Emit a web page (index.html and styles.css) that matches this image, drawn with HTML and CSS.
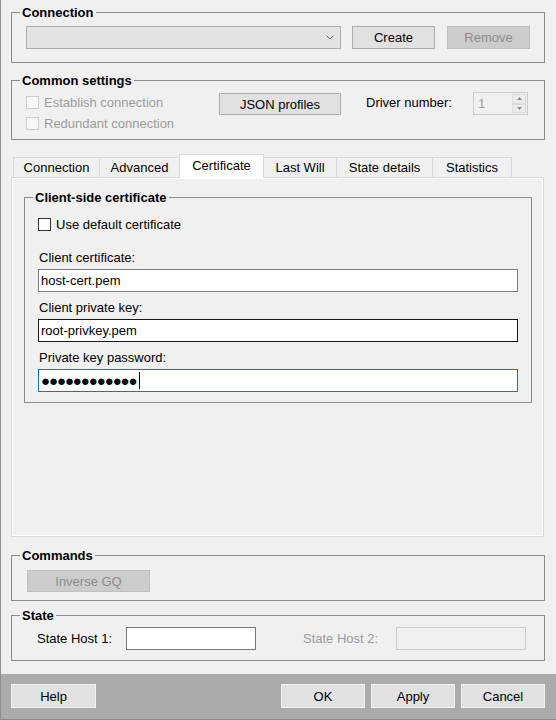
FILE: index.html
```html
<!DOCTYPE html>
<html lang="en">
<head>
    <meta charset="UTF-8">
    <title>Connection settings</title>
    <link rel="stylesheet" href="styles.css">
</head>
<body>
    <div class="dialog">
        <div class="main">
            <fieldset class="group group-connection">
                <legend>Connection</legend>
                <div class="conn-body">
                    <div class="combo">
                        <svg width="8" height="5" viewBox="0 0 8 5"><path d="M0.5 0.5 L4 4 L7.5 0.5" fill="none" stroke="#666"/></svg>
                    </div>
                    <button class="btn btn-create">Create</button>
                    <button class="btn btn-remove" disabled>Remove</button>
                </div>
            </fieldset>

            <fieldset class="group group-common">
                <legend>Common settings</legend>
                <div class="common-body">
                    <div class="checks">
                        <div class="check-row disabled"><span class="box"></span>Establish connection</div>
                        <div class="check-row disabled"><span class="box"></span>Redundant connection</div>
                    </div>
                    <button class="btn btn-json">JSON profiles</button>
                    <div class="driver-label">Driver number:</div>
                    <div class="spin">
                        <span class="spin-value">1</span>
                        <div class="spin-buttons">
                            <span><svg width="5" height="3" viewBox="0 0 5 3"><path d="M2.5 0 L5 3 L0 3Z" fill="#8a8a8a"/></svg></span>
                            <span><svg width="5" height="3" viewBox="0 0 5 3"><path d="M0 0 L5 0 L2.5 3Z" fill="#8a8a8a"/></svg></span>
                        </div>
                    </div>
                </div>
            </fieldset>

            <div class="tabs">
                <div class="tab tab-connection">Connection</div>
                <div class="tab tab-advanced">Advanced</div>
                <div class="tab tab-certificate active">Certificate</div>
                <div class="tab tab-lastwill">Last Will</div>
                <div class="tab tab-state">State details</div>
                <div class="tab tab-stats">Statistics</div>
            </div>
            <div class="panel">
                <fieldset class="group group-cert">
                    <legend>Client-side certificate</legend>
                    <div class="cert-body">
                        <div class="check-row"><span class="box"></span>Use default certificate</div>
                        <div class="field-label first">Client certificate:</div>
                        <div class="field">host-cert.pem</div>
                        <div class="field-label">Client private key:</div>
                        <div class="field hover">root-privkey.pem</div>
                        <div class="field-label">Private key password:</div>
                        <div class="field focus"><span class="dots">●●●●●●●●●●●●</span><span class="caret"></span></div>
                    </div>
                </fieldset>
            </div>

            <fieldset class="group group-commands">
                <legend>Commands</legend>
                <div class="commands-body">
                    <button class="btn btn-inverse" disabled>Inverse GQ</button>
                </div>
            </fieldset>

            <fieldset class="group group-state">
                <legend>State</legend>
                <div class="state-body">
                    <div class="state-label">State Host 1:</div>
                    <div class="field state-field"></div>
                    <div class="state-label second disabled">State Host 2:</div>
                    <div class="field state-field disabled"></div>
                </div>
            </fieldset>
        </div>

        <div class="bar">
            <button class="btn bar-btn btn-help">Help</button>
            <div class="bar-right">
                <button class="btn bar-btn">OK</button>
                <button class="btn bar-btn">Apply</button>
                <button class="btn bar-btn">Cancel</button>
            </div>
        </div>
    </div>
</body>
</html>
```

FILE: styles.css
```css
* {
    margin: 0;
    padding: 0;
    box-sizing: border-box;
}

body {
    font-family: "Liberation Sans", Arial, sans-serif;
    font-size: 13px;
    color: #000;
    background: #f0f0f0;
    width: 556px;
    height: 720px;
    overflow: hidden;
}

.dialog {
    height: 720px;
    display: flex;
    flex-direction: column;
    border-left: 1px solid #8f8f8f;
}

.main {
    flex: 1;
    display: flex;
    flex-direction: column;
    padding: 5px 11px 13px 10px;
}

/* group boxes */
.group {
    flex: none;
    min-width: 0;
    border: 1px solid #8c8c8c;
}

.group legend {
    margin-left: 8px;
    padding: 0 2px;
    font-weight: bold;
    line-height: 15px;
}

.group-common {
    margin-top: 10px;
}

.group-commands {
    margin-top: 11px;
}

.group-state {
    margin-top: 7px;
}

/* buttons */
.btn {
    font: inherit;
    color: #000;
    height: 23px;
    border: 1px solid #adadad;
    background: #e1e1e1;
}

.btn:disabled {
    background: #cccccc;
    border-color: #bfbfbf;
    color: #8d8d8d;
}

/* connection */
.conn-body {
    display: flex;
    padding: 6px 0 13px 14px;
}

.combo {
    width: 315px;
    height: 23px;
    border: 1px solid #adadad;
    background: #e3e3e3;
    display: flex;
    align-items: center;
    justify-content: flex-end;
    padding-right: 6px;
}

.btn-create {
    width: 83px;
    margin-left: 11px;
}

.btn-remove {
    width: 83px;
    margin-left: 12px;
}

/* common settings */
.common-body {
    display: flex;
    align-items: flex-start;
    padding: 4px 0 5px 14px;
}

.checks {
    width: 193px;
}

.check-row {
    height: 21px;
    display: flex;
    align-items: center;
    gap: 5px;
}

.box {
    width: 13px;
    height: 13px;
    border: 1px solid #333;
    background: #fff;
}

.check-row.disabled {
    color: #9b9b9b;
}

.check-row.disabled .box {
    border-color: #cccccc;
    background: #f7f7f7;
}

.btn-json {
    width: 122px;
    height: 22px;
    margin-top: 1px;
}

.driver-label {
    width: 107px;
    margin-left: 25px;
    line-height: 21px;
}

.spin {
    width: 55px;
    height: 23px;
    border: 1px solid #cccccc;
    background: #f0f0f0;
    color: #9b9b9b;
    display: flex;
    justify-content: space-between;
    padding: 1px;
}

.spin-value {
    padding-left: 3px;
    line-height: 19px;
}

.spin-buttons {
    width: 14px;
    display: flex;
    flex-direction: column;
}

.spin-buttons span {
    flex: 1;
    border: 1px solid #dcdcdc;
    background: #ebebeb;
    display: flex;
    align-items: center;
    justify-content: center;
}

/* tabs */
.tabs {
    flex: none;
    display: flex;
    align-items: flex-end;
    height: 23px;
    margin-top: 14px;
    padding-left: 2px;
}

.tab {
    height: 20px;
    line-height: 19px;
    text-align: center;
    border: 1px solid #d9d9d9;
    border-bottom: none;
    background: #f0f0f0;
    margin-right: -1px;
}

.tab.active {
    position: relative;
    height: 24px;
    line-height: 22px;
    margin-bottom: -1px;
    background: #fff;
}

.tab-connection { width: 87px; }
.tab-advanced { width: 81px; }
.tab-certificate { width: 85px; }
.tab-lastwill { width: 74px; }
.tab-state { width: 97px; }
.tab-stats { width: 80px; }

.panel {
    flex: 1;
    margin-right: 1px;
    padding: 12px 11px 0 12px;
    border: 1px solid #d9d9d9;
    background: #f0f0f0;
    box-shadow: inset 1px 1px 0 #fff, inset -1px -1px 0 #fff;
}

/* certificate */
.cert-body {
    padding: 9px 13px 10px 13px;
}

.field-label {
    line-height: 15px;
    margin: 8px 0 4px 1px;
}

.field-label.first {
    margin-top: 15px;
}

.field {
    height: 23px;
    line-height: 21px;
    padding: 0 2px;
    border: 1px solid #7a7a7a;
    background: #fff;
}

.field.hover {
    border-color: #171717;
}

.field.focus {
    border-color: #0078d7;
    display: flex;
    align-items: center;
}

.dots {
    font-size: 15px;
    letter-spacing: -1.1px;
}

.caret {
    width: 1px;
    height: 17px;
    background: #000;
    margin-left: 2px;
}

/* commands */
.commands-body {
    padding: 7px 0 8px 15px;
}

.btn-inverse {
    width: 123px;
    height: 22px;
}

/* state */
.state-body {
    display: flex;
    align-items: center;
    padding: 4px 0 10px 25px;
}

.state-label {
    width: 89px;
}

.state-label.second {
    width: 93px;
    margin-left: 47px;
}

.state-label.disabled {
    color: #9b9b9b;
}

.state-field {
    width: 130px;
}

.state-field.disabled {
    background: #f0f0f0;
    border-color: #cccccc;
}

/* bottom bar */
.bar {
    flex: none;
    height: 46px;
    display: flex;
    justify-content: space-between;
    align-items: flex-start;
    padding: 10px 11px 0 10px;
    background: #ababab;
    border-bottom: 1px solid #8a8a8a;
}

.bar-right {
    display: flex;
    gap: 6px;
}

.bar-btn {
    width: 84px;
    height: 24px;
    border-color: #f2f2f2;
}

.btn-help {
    width: 85px;
}
```
